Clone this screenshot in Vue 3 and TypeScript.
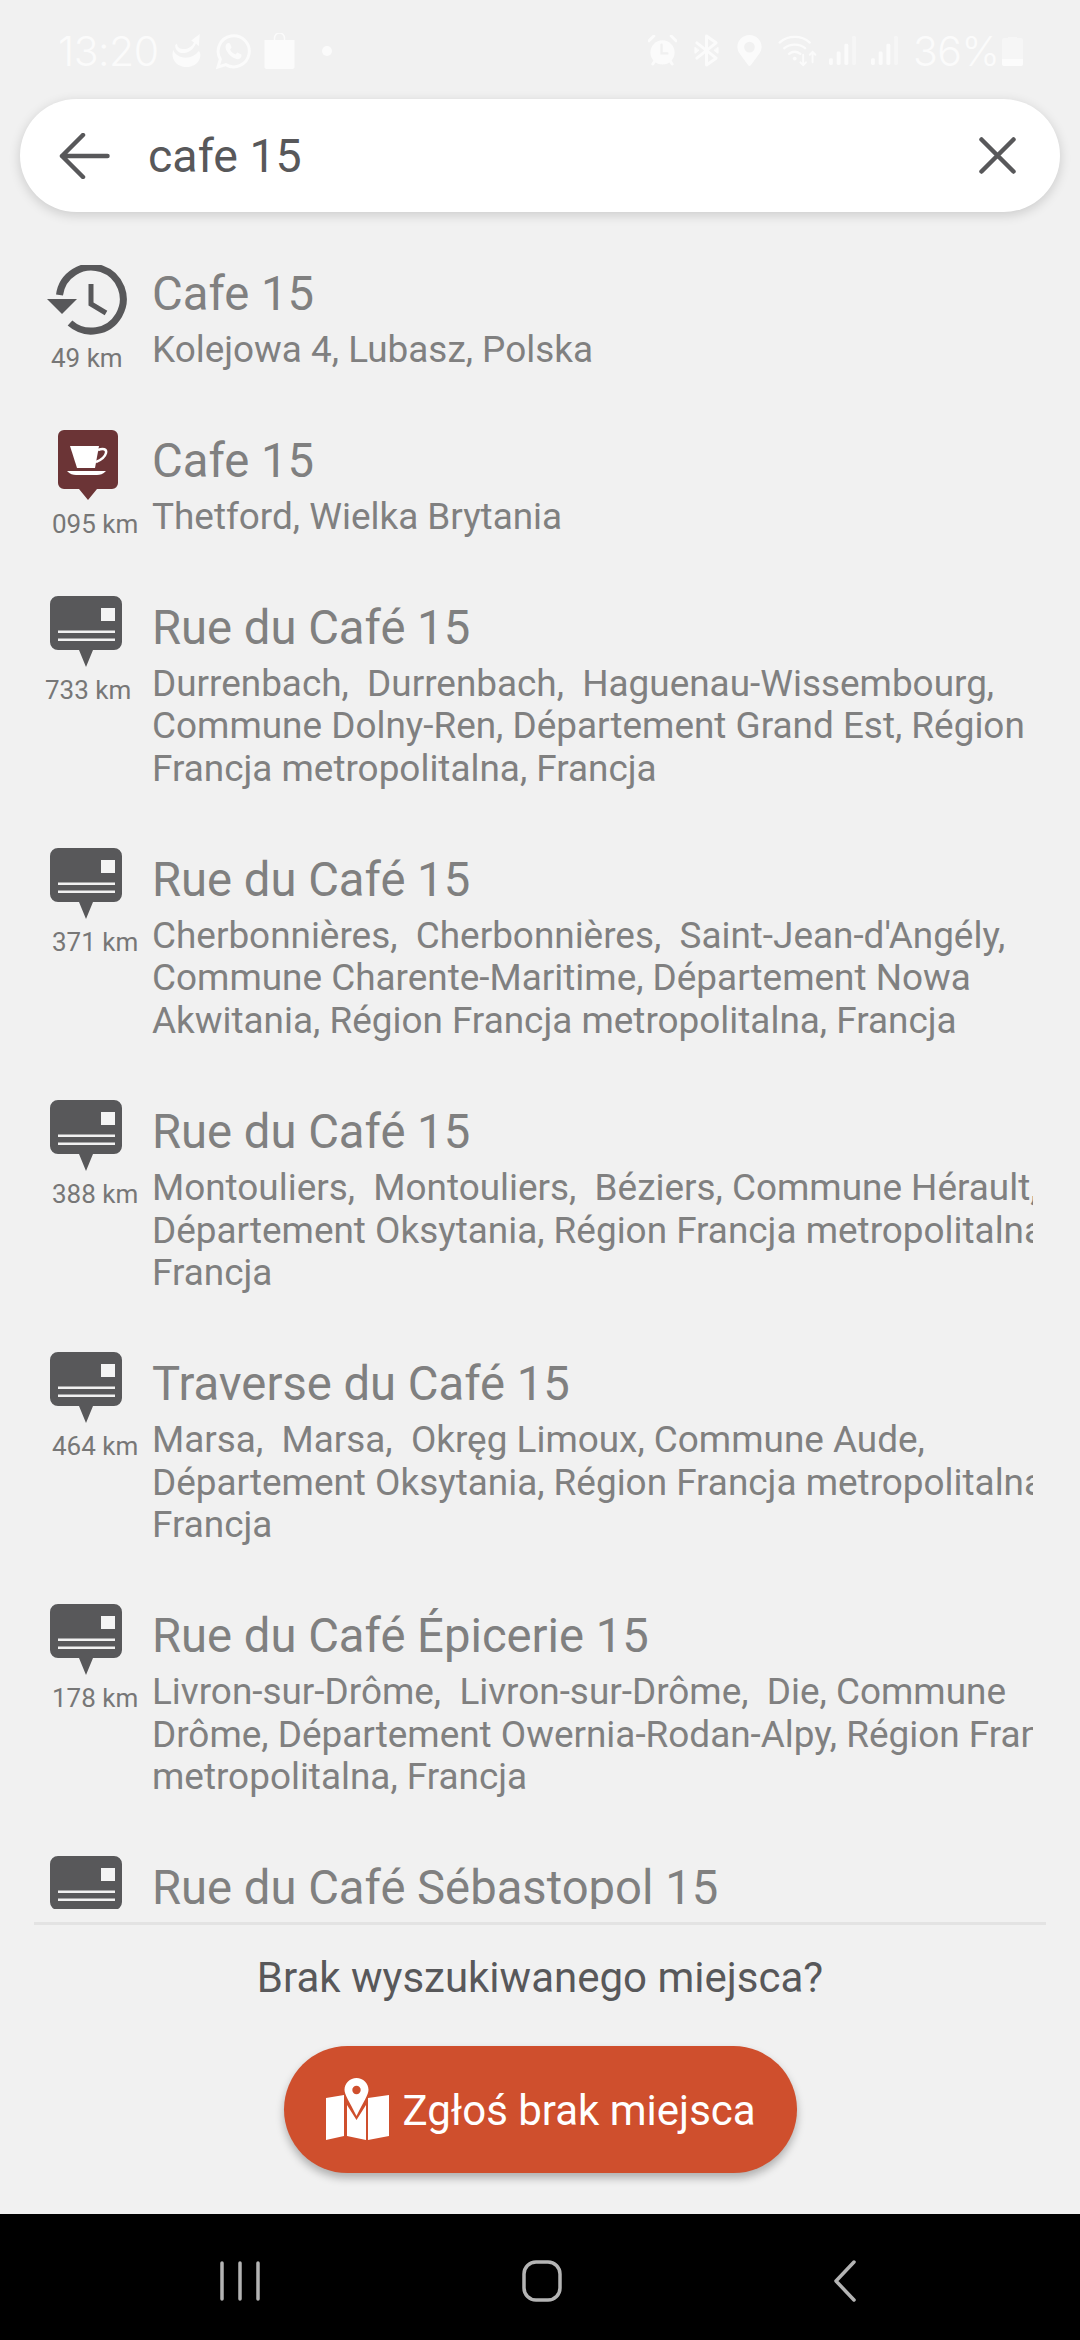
<script setup lang="ts">
interface Place {
  icon: 'history' | 'cafe' | 'street'
  dist: string
  distLeft: number
  title: string
  lines: string[]
}

const places: Place[] = [
  { icon: 'history', dist: '49 km', distLeft: 51, title: 'Cafe 15', lines: ['Kolejowa 4, Lubasz, Polska'] },
  { icon: 'cafe', dist: '095 km', distLeft: 52, title: 'Cafe 15', lines: ['Thetford, Wielka Brytania'] },
  {
    icon: 'street', dist: '733 km', distLeft: 45, title: 'Rue du Café 15',
    lines: ['Durrenbach,  Durrenbach,  Haguenau-Wissembourg,', 'Commune Dolny-Ren, Département Grand Est, Région', 'Francja metropolitalna, Francja'],
  },
  {
    icon: 'street', dist: '371 km', distLeft: 52, title: 'Rue du Café 15',
    lines: ['Cherbonnières,  Cherbonnières,  Saint-Jean-d\'Angély,', 'Commune Charente-Maritime, Département Nowa', 'Akwitania, Région Francja metropolitalna, Francja'],
  },
  {
    icon: 'street', dist: '388 km', distLeft: 52, title: 'Rue du Café 15',
    lines: ['Montouliers,  Montouliers,  Béziers, Commune Hérault,', 'Département Oksytania, Région Francja metropolitalna,', 'Francja'],
  },
  {
    icon: 'street', dist: '464 km', distLeft: 52, title: 'Traverse du Café 15',
    lines: ['Marsa,  Marsa,  Okręg Limoux, Commune Aude,', 'Département Oksytania, Région Francja metropolitalna,', 'Francja'],
  },
  {
    icon: 'street', dist: '178 km', distLeft: 52, title: 'Rue du Café Épicerie 15',
    lines: ['Livron-sur-Drôme,  Livron-sur-Drôme,  Die, Commune', 'Drôme, Département Owernia-Rodan-Alpy, Région Francja', 'metropolitalna, Francja'],
  },
  { icon: 'street', dist: '', distLeft: 52, title: 'Rue du Café Sébastopol 15', lines: [] },
]
</script>

<template>
  <div class="page">
    <header class="status">
      <span class="clock">13:20</span>
      <svg class="s-moon" width="31" height="36" viewBox="0 0 30 38" fill="#fbfbfb">
        <path d="M29 1l-1 13-3-3c-3 7-9 11-16 10-4-1-6-4-6-8l2-2c0 4 3 6 7 6 5 0 9-3 11-7l-3-2z" />
        <path d="M1 18c2 5 7 8 13 8s11-3 14-7c2 2 2 5 1 8-2 6-8 9-14 9S3 33 1 27c-1-3-1-6 0-9z" />
      </svg>
      <svg class="s-wa" width="35" height="37" viewBox="0 0 36 38" fill="none" stroke="#fbfbfb">
        <path stroke-width="3" d="M2 35l2.500-8A16 16 0 1 1 10 32.500z" />
        <path fill="#fbfbfb" stroke="none" d="M11 11c1-1 3-1 3.500 0l1.500 3.500-1.500 2.500c1 2.500 3 4 5.500 5l2-2 4 2c.5 1 0 3-1 4-2 1.500-5 1-8-1-3-2-5-4.500-6.500-7.500-1-2.500-1-5 .5-6.500z" />
      </svg>
      <svg class="s-bag" width="31" height="36" viewBox="0 0 30 36" fill="#fbfbfb">
        <path d="M0 7h30v27a2 2 0 0 1-2 2H2a2 2 0 0 1-2-2z" />
        <path d="M10 7V5a5 5 0 0 1 10 0v2" fill="none" stroke="#fbfbfb" stroke-width="1.500" />
      </svg>
      <span class="dot"></span>
      <span class="grow"></span>
      <svg class="s-alarm" width="29" height="31" viewBox="0 0 30 32" fill="#fbfbfb">
        <circle cx="15" cy="18" r="12.500" />
        <path d="M1 6l5-5M29 6l-5-5M5 30l2-3M25 30l-2-3" stroke="#fbfbfb" stroke-width="3" stroke-linecap="round" />
        <path d="M14 10v9h6" fill="none" stroke="#f0f0f0" stroke-width="2.500" stroke-linecap="round" />
      </svg>
      <svg class="s-bt" width="27" height="33" viewBox="0 0 28 34" fill="none" stroke="#fbfbfb" stroke-width="3" stroke-linejoin="round" stroke-linecap="round">
        <path d="M4 9l20 16-10 7V2l10 7L4 25" />
        <path d="M2 14v6l4-3zM26 14v6l-4-3z" fill="#fbfbfb" stroke-width="1" />
      </svg>
      <svg class="s-pin" width="25" height="31" viewBox="0 0 25 32" fill="#fbfbfb">
        <path fill-rule="evenodd" d="M12.500 0C5.600 0 0 5.400 0 12.200c0 3.300 1.200 5.600 3 7.800l8 11c.8 1.200 2.200 1.200 3 0l8-11c1.800-2.200 3-4.500 3-7.800C25 5.400 19.400 0 12.500 0zm0 7a5.500 5.500 0 1 1 0 11 5.500 5.500 0 0 1 0-11z" />
      </svg>
      <svg class="s-wifi" width="40" height="32" viewBox="0 0 41 34" fill="none" stroke="#fbfbfb" stroke-width="2.500" stroke-linecap="round">
        <path d="M1 8c9-8 23-8 32 0M6 14c6-5 16-5 22 0M11 20c4-3 8-3 12 0" />
        <circle cx="17" cy="25" r="2" fill="#fbfbfb" stroke="none" />
        <path stroke-width="2" d="M26 21v11M23 29l3 3 3-3M36 29V18M33 21l3-3 3 3" />
      </svg>
      <svg class="s-sig1" width="27" height="29" viewBox="0 0 28 30">
        <rect x="0" y="23" width="4" height="7" rx="1.500" fill="#fbfbfb" />
        <rect x="8" y="16" width="4" height="14" rx="1.500" fill="#fbfbfb" />
        <rect x="16" y="8" width="4" height="22" rx="1.500" fill="#fbfbfb" />
        <rect x="24" y="0" width="4" height="30" rx="1.500" fill="#f6f6f6" />
      </svg>
      <svg class="s-sig2" width="27" height="29" viewBox="0 0 28 30">
        <rect x="0" y="23" width="4" height="7" rx="1.500" fill="#fbfbfb" />
        <rect x="8" y="16" width="4" height="14" rx="1.500" fill="#fbfbfb" />
        <rect x="16" y="8" width="4" height="22" rx="1.500" fill="#fbfbfb" />
        <rect x="24" y="0" width="4" height="30" rx="1.500" fill="#f6f6f6" />
      </svg>
      <span class="pct">36%</span>
      <svg class="s-batt" width="21" height="30" viewBox="0 0 21 30">
        <path d="M6 2V1h9v1h4a2 2 0 0 1 2 2v24a2 2 0 0 1-2 2H2a2 2 0 0 1-2-2V4a2 2 0 0 1 2-2z" fill="#f6f6f6" />
        <path d="M0 23h21v5a2 2 0 0 1-2 2H2a2 2 0 0 1-2-2z" fill="#fcfcfc" />
      </svg>
    </header>

    <div class="search">
      <svg width="51" height="46" viewBox="0 0 51 46" fill="none" stroke="#58585a" stroke-width="4.500" stroke-linecap="round" stroke-linejoin="round">
        <path d="M48.500 23H3M24 2L3 23l21 21" />
      </svg>
      <span class="query">cafe 15</span>
      <svg width="37" height="37" viewBox="0 0 37 37" fill="none" stroke="#58585a" stroke-width="4.500" stroke-linecap="round">
        <path d="M2.500 2.500l32 32M34.500 2.500l-32 32" />
      </svg>
    </div>

    <main class="list">
      <article v-for="(p, i) in places" :key="i" class="row">
        <div class="lead">
          <div class="icon-box">
            <svg v-if="p.icon === 'history'" class="i-history" width="80" height="70" viewBox="0 0 80 70">
              <path d="M12.500 30A32 32 0 1 1 23 58" fill="none" stroke="#58585a" stroke-width="7" />
              <path d="M0 34h30L15 49z" fill="#58585a" />
              <path d="M44 19v20l15 9" fill="none" stroke="#58585a" stroke-width="5" />
            </svg>
            <svg v-else-if="p.icon === 'cafe'" class="i-cafe" width="60" height="71" viewBox="0 0 60 71">
              <path d="M6 0h48a6 6 0 0 1 6 6v47a6 6 0 0 1-6 6H39l-9 11-9-11H6a6 6 0 0 1-6-6V6a6 6 0 0 1 6-6z" fill="#6b3436" />
              <path d="M12 16h29l-4 22H19z" fill="#fff" />
              <path d="M40 20c5-2 9-1 8 3-1 4-5 7-10 9" fill="none" stroke="#fff" stroke-width="2.500" />
              <path d="M9 41h39c-3 3-6 4-9 4H18c-3 0-6-1-9-4z" fill="#fff" />
            </svg>
            <svg v-else class="i-street" width="72" height="71" viewBox="0 0 72 71">
              <path d="M8 0h56a8 8 0 0 1 8 8v38a8 8 0 0 1-8 8H43l-7 17-7-17H8a8 8 0 0 1-8-8V8a8 8 0 0 1 8-8z" fill="#58585a" />
              <rect x="51" y="12" width="14" height="13" fill="#f4f4f4" />
              <rect x="8" y="34.500" width="57" height="2.500" fill="#f1f1f1" />
              <rect x="8" y="42.500" width="57" height="2.500" fill="#f1f1f1" />
            </svg>
          </div>
          <div v-if="p.dist" class="dist" :style="{ paddingLeft: p.distLeft + 'px' }">{{ p.dist }}</div>
        </div>
        <div class="body">
          <div class="title">{{ p.title }}</div>
          <div v-for="(line, j) in p.lines" :key="j" class="line">{{ line }}</div>
        </div>
      </article>
    </main>

    <footer class="foot">
      <div class="ask">Brak wyszukiwanego miejsca?</div>
      <button class="report" type="button">
        <svg width="63" height="63" viewBox="0 0 63 63" fill="#fff">
          <path d="M0 20l18-3v41L0 62z" />
          <path d="M21 27l9.500 15L40 27v35l-19-4z" />
          <path d="M42 20l21-3v41l-21 4z" />
          <path fill-rule="evenodd" d="M30.500 0c-6.600 0-12 5.200-12 11.800 0 5.200 5 12 12 26.200 7-14.200 12-21 12-26.200C42.500 5.200 37.100 0 30.500 0zm0 7.800a4.200 4.200 0 1 1 0 8.400 4.200 4.200 0 0 1 0-8.400z" />
        </svg>
        <span>Zgłoś brak miejsca</span>
      </button>
    </footer>

    <nav class="nav">
      <svg width="40" height="40" viewBox="0 0 40 40" fill="none" stroke="#b4b4b4" stroke-width="3.500" stroke-linecap="round">
        <path d="M2 2v36M20 2v36M38 2v36" />
      </svg>
      <svg width="40" height="42" viewBox="0 0 40 42" fill="none" stroke="#b4b4b4" stroke-width="3.500">
        <rect x="2" y="2" width="36" height="38" rx="12" />
      </svg>
      <svg width="23" height="42" viewBox="0 0 23 42" fill="none" stroke="#b4b4b4" stroke-width="3.500" stroke-linecap="round" stroke-linejoin="round">
        <path d="M21 2L3 21l18 19" />
      </svg>
    </nav>
  </div>
</template>

<style>
html, body { margin: 0; background: #f1f1f1; }
</style>

<style scoped>
.page {
  width: 1080px;
  height: 2340px;
  display: flex;
  flex-direction: column;
  background: #f1f1f1;
  font-family: Roboto, "Noto Sans", sans-serif;
  overflow: hidden;
}
.status {
  height: 99px;
  flex: none;
  box-sizing: border-box;
  padding: 33px 57px 0 58px;
  display: flex;
  align-items: flex-start;
  color: #fbfbfb;
}
.clock, .pct {
  font-family: Inter, Roboto, sans-serif;
  font-size: 41px;
  font-weight: 300;
  line-height: 36px;
  letter-spacing: -0.5px;
  white-space: nowrap;
}
.clock { width: 95px; }
.s-moon { margin-left: 18px; }
.s-wa { margin-left: 14px; }
.s-bag { margin-left: 13px; }
.dot { width: 10px; height: 10px; border-radius: 50%; background: #fbfbfb; margin: 13px 0 0 27px; }
.grow { flex: 1; }
.s-alarm { margin-top: 2px; }
.s-bt { margin: 1px 0 0 16px; }
.s-pin { margin: 2px 0 0 17px; }
.s-wifi { margin: 2px 0 0 16px; }
.s-sig1 { margin: 3px 0 0 11px; }
.s-sig2 { margin: 3px 0 0 15px; }
.pct { margin-left: 15px; width: 83px; }
.s-batt { margin: 3px 0 0 6px; }

.search {
  flex: none;
  margin: 0 20px;
  height: 113px;
  box-sizing: border-box;
  padding: 0 44px 0 39px;
  display: flex;
  align-items: center;
  background: #fff;
  border-radius: 57px;
  box-shadow: 0 3px 12px rgba(0, 0, 0, 0.16);
  position: relative;
}
.query {
  flex: 1;
  margin-left: 38px;
  font-size: 46.5px;
  color: #58585a;
}

.list {
  flex: none;
  height: 1697px;
  box-sizing: border-box;
  margin-right: 47px;
  padding-top: 18px;
  overflow: hidden;
}
.row {
  display: flex;
  padding-top: 30px;
  padding-bottom: 25.3px;
}
.lead {
  flex: none;
  width: 152px;
  height: 100px;
  display: flex;
  flex-direction: column;
}
.icon-box {
  height: 75px;
  display: flex;
  justify-content: flex-start;
  align-items: flex-start;
}
.i-history { margin: 5px 0 0 47px; }
.i-cafe { margin: 3px 0 0 58px; }
.i-street { margin: 2px 0 0 50px; }
.dist {
  font-size: 26px;
  line-height: 30px;
  margin-top: 8px;
  color: #777;
  white-space: nowrap;
}
.body { flex: 1; min-width: 0; }
.title {
  font-size: 47.2px;
  line-height: 69px;
  color: #808080;
  white-space: nowrap;
}
.line {
  font-size: 36.9px;
  line-height: 42.6px;
  color: #808080;
  white-space: pre;
}

.foot {
  flex: none;
  margin: 13px 34px 0;
  border-top: 3px solid #e3e3e3;
  display: flex;
  flex-direction: column;
  align-items: center;
  height: 292px;
  box-sizing: border-box;
}
.ask {
  margin-top: 29px;
  font-size: 42px;
  line-height: 48px;
  color: #58585a;
}
.report {
  margin-top: 44px;
  width: 513px;
  height: 127px;
  border: 0;
  border-radius: 64px;
  background: #cf4f2d;
  box-shadow: 0 5px 9px rgba(0, 0, 0, 0.28);
  display: flex;
  align-items: center;
  justify-content: flex-start;
  padding: 0 0 0 42px;
  color: #fff;
  font-family: inherit;
  font-size: 42px;
}
.report span { margin: 2px 0 0 14px; }
.report svg { flex: none; }
.nav {
  flex: 1;
  background: #000;
  display: flex;
  align-items: center;
  box-sizing: border-box;
  padding: 8px 0 0 220px;
}
.nav svg:nth-child(2) { margin-left: 262px; }
.nav svg:nth-child(3) { margin-left: 271px; }
</style>
